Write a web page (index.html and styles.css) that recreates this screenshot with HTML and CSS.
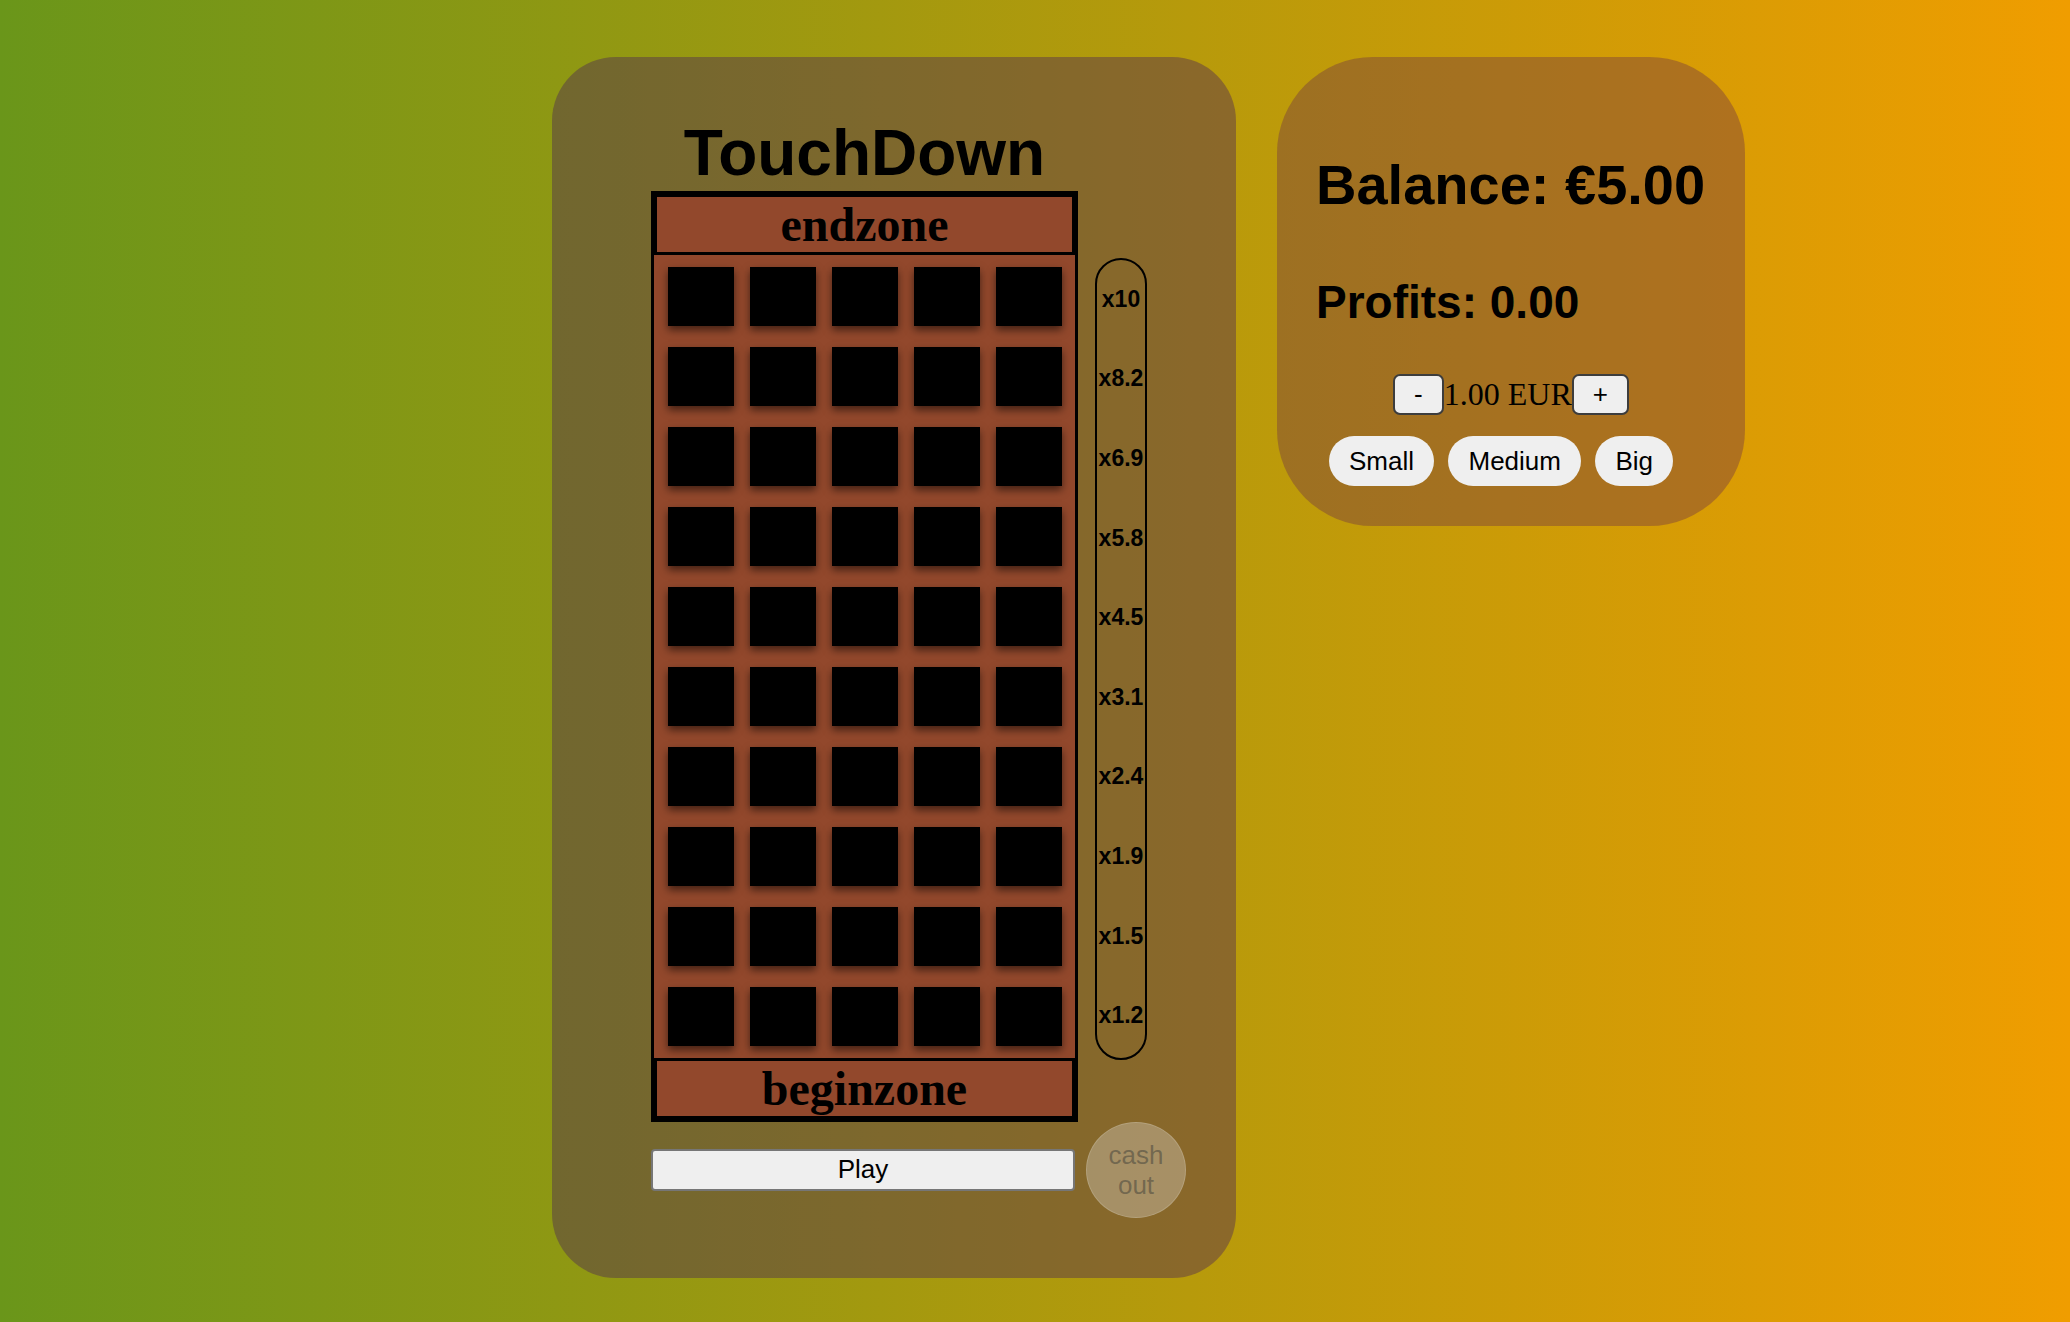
FILE: index.html
```html
<!DOCTYPE html>
<html lang="en">
<head>
<meta charset="utf-8">
<title>TouchDown</title>
<link rel="stylesheet" href="styles.css">
</head>
<body>
<main class="layout">
  <section class="game-card">
    <h1 class="title">TouchDown</h1>
    <div class="board-row">
      <div class="board">
        <div class="zone">endzone</div>
        <div class="grid">
          <div class="cell"></div><div class="cell"></div><div class="cell"></div><div class="cell"></div><div class="cell"></div>
          <div class="cell"></div><div class="cell"></div><div class="cell"></div><div class="cell"></div><div class="cell"></div>
          <div class="cell"></div><div class="cell"></div><div class="cell"></div><div class="cell"></div><div class="cell"></div>
          <div class="cell"></div><div class="cell"></div><div class="cell"></div><div class="cell"></div><div class="cell"></div>
          <div class="cell"></div><div class="cell"></div><div class="cell"></div><div class="cell"></div><div class="cell"></div>
          <div class="cell"></div><div class="cell"></div><div class="cell"></div><div class="cell"></div><div class="cell"></div>
          <div class="cell"></div><div class="cell"></div><div class="cell"></div><div class="cell"></div><div class="cell"></div>
          <div class="cell"></div><div class="cell"></div><div class="cell"></div><div class="cell"></div><div class="cell"></div>
          <div class="cell"></div><div class="cell"></div><div class="cell"></div><div class="cell"></div><div class="cell"></div>
          <div class="cell"></div><div class="cell"></div><div class="cell"></div><div class="cell"></div><div class="cell"></div>
        </div>
        <div class="zone">beginzone</div>
      </div>
      <div class="multipliers">
        <span class="mult">x10</span>
        <span class="mult">x8.2</span>
        <span class="mult">x6.9</span>
        <span class="mult">x5.8</span>
        <span class="mult">x4.5</span>
        <span class="mult">x3.1</span>
        <span class="mult">x2.4</span>
        <span class="mult">x1.9</span>
        <span class="mult">x1.5</span>
        <span class="mult">x1.2</span>
      </div>
    </div>
    <div class="play-row">
      <button class="play-btn" type="button">Play</button>
      <button class="cashout-btn" type="button" disabled>cash out</button>
    </div>
  </section>

  <section class="wallet-card">
    <h2 class="balance">Balance: €5.00</h2>
    <h3 class="profits">Profits: 0.00</h3>
    <div class="bet-row">
      <button class="step-btn" type="button">-</button>
      <span class="bet-amount">1.00 EUR</span>
      <button class="step-btn" type="button">+</button>
    </div>
    <div class="size-row">
      <button class="size-btn" type="button">Small</button>
      <button class="size-btn" type="button">Medium</button>
      <button class="size-btn" type="button">Big</button>
    </div>
  </section>
</main>
</body>
</html>
```

FILE: styles.css
```css
* {
  box-sizing: border-box;
}

html, body {
  margin: 0;
  padding: 0;
}

body {
  min-height: 100vh;
  background: linear-gradient(90deg, #6a961a 0%, #f09d00 100%);
  font-family: "Liberation Sans", Arial, sans-serif;
  color: #000;
}

.layout {
  display: flex;
  align-items: flex-start;
  gap: 41px;
  padding: 57px 0 0 552px;
}

/* ---------- game card ---------- */
.game-card {
  width: 684px;
  padding: 60px 0 60px 99px;
  border-radius: 64px;
  background: rgba(70, 30, 90, 0.4);
  display: flex;
  flex-direction: column;
}

.title {
  width: 427px;
  margin: 0;
  text-align: center;
  font-size: 64px;
  line-height: 73.6px;
  font-weight: bold;
}

.board-row {
  display: flex;
  align-items: center;
  gap: 17px;
}

.board {
  width: 427px;
  border: 3px solid #000;
  display: flex;
  flex-direction: column;
}

.zone {
  border: 3px solid #000;
  background: #92482c;
  text-align: center;
  font-family: "Liberation Serif", "Times New Roman", serif;
  font-weight: bold;
  font-size: 48px;
  line-height: 56px;
  height: 61px;
}

.grid {
  background: #92482c;
  display: grid;
  grid-template-columns: repeat(5, 66px);
  grid-auto-rows: 59.5px;
  column-gap: 16px;
  row-gap: 20.5px;
  padding: 12px 13.5px 11.5px;
}

.cell {
  background: #000;
  box-shadow: 0 4px 8px rgba(0, 0, 0, 0.55);
}

.multipliers {
  width: 52px;
  height: 802px;
  margin-top: 5px;
  border: 2px solid #000;
  border-radius: 26px;
  display: flex;
  flex-direction: column;
  padding: 0 0 2px;
}

.mult {
  flex: 1;
  display: flex;
  align-items: center;
  justify-content: center;
  font-size: 23px;
  font-weight: bold;
  white-space: nowrap;
}

.play-row {
  display: flex;
  align-items: center;
  gap: 11px;
  height: 96px;
}

.play-btn {
  width: 424px;
  height: 42px;
  margin-left: 0;
  border: 2px solid #767676;
  border-radius: 4px;
  background: #efefef;
  font-family: "Liberation Sans", Arial, sans-serif;
  font-size: 26px;
  color: #000;
  padding: 0;
}

.cashout-btn {
  width: 100px;
  height: 96px;
  border-radius: 50%;
  border: 1px solid rgba(255, 255, 255, 0.15);
  background: rgba(239, 239, 239, 0.3);
  color: rgba(70, 70, 60, 0.55);
  font-family: "Liberation Sans", Arial, sans-serif;
  font-size: 26px;
  line-height: 30px;
  padding: 0 14px;
}

/* ---------- wallet card ---------- */
.wallet-card {
  width: 468px;
  padding: 96px 37px 40px;
  border-radius: 96px;
  background: rgba(110, 50, 70, 0.4);
  display: flex;
  flex-direction: column;
}

.balance {
  margin: 0;
  padding-left: 2px;
  font-size: 56px;
  line-height: 64.4px;
  font-weight: bold;
  white-space: nowrap;
}

.profits {
  margin: 58.5px 0 0;
  padding-left: 2px;
  font-size: 46px;
  line-height: 52px;
  font-weight: bold;
}

.bet-row {
  margin-top: 46.5px;
  display: flex;
  justify-content: center;
  align-items: center;
  height: 41px;
}

.step-btn {
  height: 41px;
  padding: 0 19px;
  border: 2px solid #3d3d3d;
  border-radius: 7px;
  background: #efefef;
  font-family: "Liberation Sans", Arial, sans-serif;
  font-size: 26px;
  color: #000;
}

.bet-amount {
  font-family: "Liberation Serif", "Times New Roman", serif;
  font-size: 32px;
  line-height: 37px;
}

.size-row {
  margin-top: 21px;
  display: flex;
  justify-content: center;
  gap: 14.5px;
  padding-right: 20px;
}

.size-btn {
  height: 50px;
  padding: 0 20px;
  border: none;
  border-radius: 25px;
  background: #efefef;
  font-family: "Liberation Sans", Arial, sans-serif;
  font-size: 26px;
  color: #000;
}
```
